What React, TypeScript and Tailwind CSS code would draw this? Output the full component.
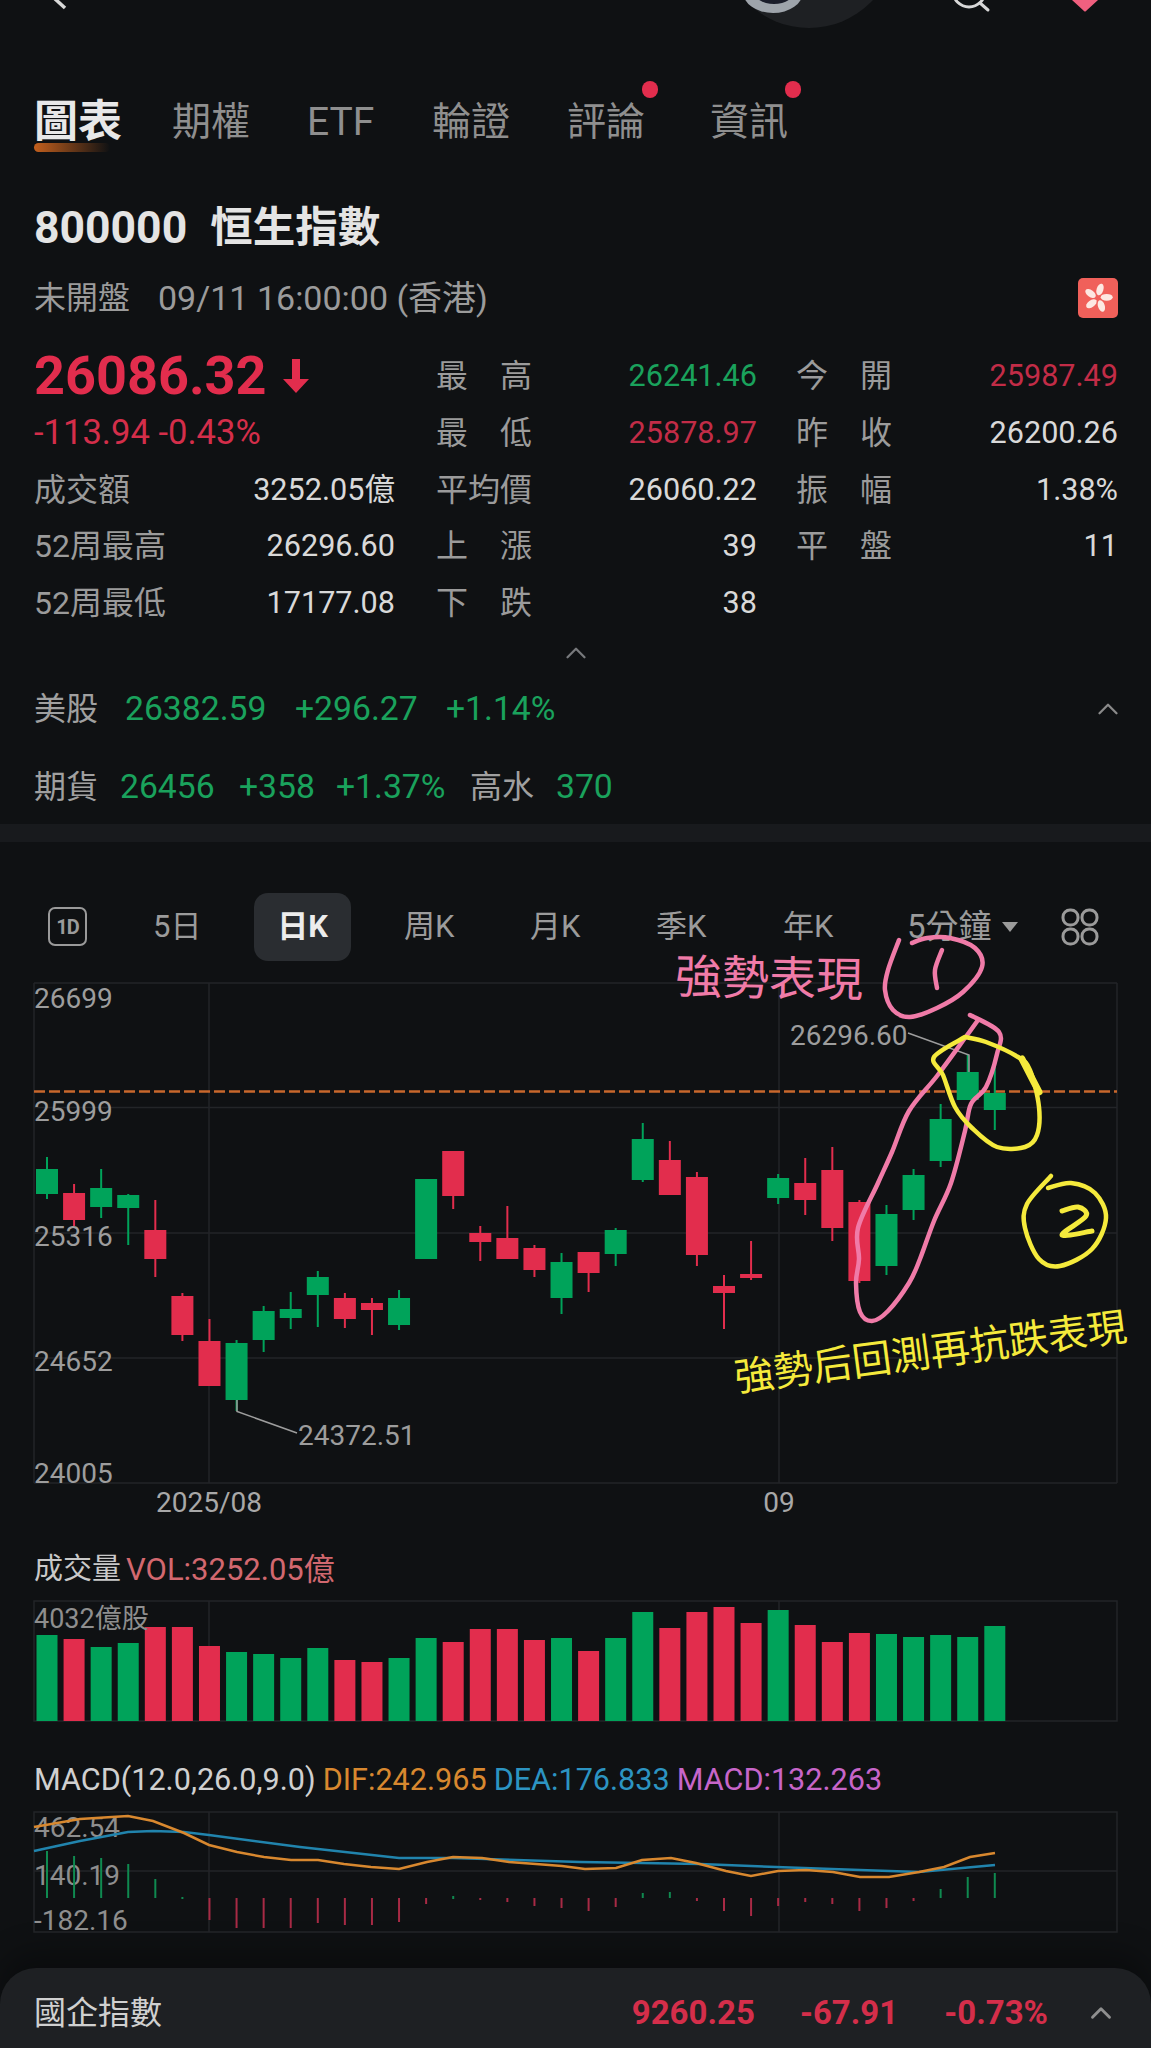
import { ChevronUp } from 'lucide-react'

const FONT = "font-['Roboto','Noto_Sans_CJK_TC',sans-serif]"
const UP = '#00a35a'
const DOWN = '#e22d4d'
const GRID = '#232528'
const PINK = '#f07ba8'
const YELLOW = '#f5ea3c'

type Pt = [number, number]

// [green?, high, top, bottom, low] in page pixels
const CANDLES: [number, number, number, number, number][] = [
  [1, 1157, 1169, 1194, 1199],
  [0, 1184, 1193, 1220, 1226],
  [1, 1169, 1188, 1207, 1218],
  [1, 1194, 1195, 1208, 1245],
  [0, 1200, 1230, 1259, 1277],
  [0, 1293, 1296, 1335, 1341],
  [0, 1319, 1341, 1386, 1386],
  [1, 1340, 1343, 1400, 1411],
  [1, 1306, 1311, 1340, 1352],
  [1, 1292, 1309, 1318, 1329],
  [1, 1271, 1277, 1295, 1327],
  [0, 1293, 1298, 1319, 1328],
  [0, 1298, 1303, 1310, 1335],
  [1, 1290, 1298, 1325, 1330],
  [1, 1179, 1179, 1259, 1259],
  [0, 1151, 1151, 1196, 1209],
  [0, 1226, 1233, 1242, 1261],
  [0, 1206, 1238, 1259, 1259],
  [0, 1245, 1248, 1270, 1277],
  [1, 1253, 1262, 1298, 1314],
  [0, 1252, 1252, 1273, 1292],
  [1, 1228, 1230, 1254, 1266],
  [1, 1123, 1139, 1180, 1182],
  [0, 1141, 1160, 1195, 1195],
  [0, 1172, 1177, 1255, 1266],
  [0, 1275, 1286, 1293, 1329],
  [0, 1241, 1274, 1278, 1280],
  [1, 1174, 1178, 1198, 1204],
  [0, 1158, 1183, 1200, 1215],
  [0, 1147, 1170, 1228, 1241],
  [0, 1200, 1202, 1281, 1283],
  [1, 1205, 1214, 1266, 1275],
  [1, 1169, 1175, 1210, 1220],
  [1, 1104, 1119, 1161, 1167],
  [1, 1055, 1072, 1100, 1100],
  [1, 1066, 1093, 1110, 1130],
]

// bar top in page pixels, all bars stand on y = 1721
const VOLUME: [number, number][] = [
  [1, 1635], [0, 1639], [1, 1647], [1, 1643], [0, 1627], [0, 1627], [0, 1646], [1, 1652], [1, 1654],
  [1, 1658], [1, 1648], [0, 1660], [0, 1662], [1, 1658], [1, 1638], [0, 1642], [0, 1629], [0, 1629],
  [0, 1640], [1, 1638], [0, 1651], [1, 1638], [1, 1612], [0, 1628], [0, 1612], [0, 1607], [0, 1623],
  [1, 1610], [0, 1625], [0, 1642], [0, 1633], [1, 1634], [1, 1637], [1, 1635], [1, 1637], [1, 1626],
]

// [green?, top, bottom] of the MACD histogram
const HIST: [number, number, number][] = [
  [1, 1851, 1898], [1, 1856, 1898], [1, 1858, 1898], [1, 1864, 1898], [1, 1879, 1898], [1, 1897, 1899],
  [0, 1898, 1920], [0, 1898, 1928], [0, 1898, 1928], [0, 1898, 1928], [0, 1898, 1923], [0, 1898, 1925],
  [0, 1898, 1925], [0, 1898, 1922], [0, 1898, 1904], [1, 1896, 1899], [0, 1898, 1898], [0, 1898, 1902],
  [0, 1898, 1906], [0, 1898, 1908], [0, 1898, 1911], [0, 1898, 1907], [1, 1893, 1898], [1, 1892, 1898],
  [0, 1898, 1901], [0, 1898, 1911], [0, 1898, 1916], [0, 1898, 1906], [0, 1898, 1902], [0, 1898, 1904],
  [0, 1898, 1911], [0, 1898, 1908], [0, 1898, 1901], [1, 1889, 1898], [1, 1877, 1898], [1, 1873, 1898],
]

const DEA_LINE =
  '34,1851 80,1841 128,1832 153,1831 184,1832 209,1835 300,1847 399,1858 453,1858 580,1862 642,1863 700,1864 751,1866 860,1870 919,1872 995,1865'
const DIF_LINE =
  '34,1827 80,1819 128,1816 153,1821 184,1833 209,1845 237,1852 264,1857 291,1860 318,1860 344,1864 371,1867 399,1869 427,1862 453,1857 482,1858 509,1862 536,1864 562,1866 585,1869 616,1868 642,1860 671,1858 696,1863 726,1871 751,1876 778,1871 806,1870 833,1872 860,1877 889,1877 919,1872 944,1867 970,1857 995,1853'

// pen marks on the screenshot
const BIG_LOOP: Pt[] = [
  [970, 1015], [999, 1032], [997, 1054], [986, 1087], [971, 1104], [965, 1131], [951, 1183], [934, 1221],
  [920, 1259], [909, 1283], [888, 1311], [872, 1321], [860, 1312], [856, 1283], [859, 1259], [858, 1228],
  [878, 1183], [892, 1152], [909, 1111], [937, 1076], [965, 1038], [978, 1020],
]
const CIRCLE_1: Pt[] = [
  [899, 940], [888, 970], [885, 990], [893, 1010], [910, 1017], [937, 1008], [963, 992], [982, 967], [975, 948],
  [950, 938], [927, 938], [912, 943],
]
const ONE: Pt[] = [[942, 950], [935, 970], [937, 988]]
const RING: Pt[] = [
  [965, 1037], [934, 1057], [943, 1075], [955, 1107], [972, 1128], [997, 1147], [1025, 1147], [1037, 1135],
  [1039, 1107], [1030, 1070], [1018, 1057], [986, 1042], [965, 1037],
]
const CIRCLE_2: Pt[] = [
  [1051, 1176], [1027, 1204], [1025, 1228], [1039, 1259], [1060, 1266], [1092, 1249], [1106, 1218], [1095, 1193],
  [1071, 1183], [1048, 1188],
]
const TWO: Pt[] = [[1062, 1211], [1078, 1207], [1086, 1216], [1062, 1235], [1092, 1231]]

// catmull-rom through the points
function smooth(p: Pt[]) {
  let d = `M${p[0][0]} ${p[0][1]}`
  for (let i = 0; i < p.length - 1; i++) {
    const a = p[Math.max(i - 1, 0)]
    const b = p[i]
    const c = p[i + 1]
    const e = p[Math.min(i + 2, p.length - 1)]
    d += `C${b[0] + (c[0] - a[0]) / 6} ${b[1] + (c[1] - a[1]) / 6} ${c[0] - (e[0] - b[0]) / 6} ${c[1] - (e[1] - b[1]) / 6} ${c[0]} ${c[1]}`
  }
  return d
}

const cx = (i: number) => 47 + i * 27.08

const Cell = ({
  label,
  value,
  color = 'text-[#d9d9d9]',
  className = '',
}: {
  label: string
  value: string
  color?: string
  className?: string
}) => (
  <div className={`flex items-center justify-between ${className}`}>
    <span className={`text-[#9b9b9b] text-[32px] ${label.length === 2 ? 'w-[96px] flex justify-between' : ''}`}>
      {label.length === 2 ? (
        <>
          <span>{label[0]}</span>
          <span>{label[1]}</span>
        </>
      ) : (
        label
      )}
    </span>
    <span className={`text-[30.6px] ${color}`}>{value}</span>
  </div>
)

function Candles() {
  return (
    <svg viewBox="0 960 1151 560" className="block w-[1151px] h-[560px] overflow-visible">
      {[983, 1107.5, 1233, 1358, 1483].map((y) => (
        <line key={y} x1="34" x2="1117" y1={y} y2={y} stroke={GRID} strokeWidth="1.5" />
      ))}
      {[34, 209, 779, 1117].map((x) => (
        <line key={x} x1={x} x2={x} y1="983" y2="1483" stroke={GRID} strokeWidth="1.5" />
      ))}
      {[
        ['26699', 998],
        ['25999', 1111],
        ['25316', 1236],
        ['24652', 1361],
        ['24005', 1473],
      ].map(([t, y]) => (
        <text key={t} x="34" y={Number(y) + 10} fill="#9d9d9d" fontSize="28">
          {t}
        </text>
      ))}
      <line x1="34" x2="1117" y1="1091.5" y2="1091.5" stroke="#c8672c" strokeWidth="2.5" strokeDasharray="11 4" />
      {CANDLES.map(([g, hi, top, bot, lo], i) => {
        const c = g ? UP : DOWN
        return (
          <g key={i}>
            <line x1={cx(i)} x2={cx(i)} y1={hi} y2={lo} stroke={c} strokeWidth="2" />
            <rect x={cx(i) - 11} y={top} width="22" height={bot - top} fill={c} />
          </g>
        )
      })}
      <path d="M237 1400V1411.5L297 1433" fill="none" stroke="#9d9d9d" strokeWidth="1.5" />
      <path d="M908 1033L969 1055V1072" fill="none" stroke="#9d9d9d" strokeWidth="1.5" />
      <text x="298" y="1445" fill="#9d9d9d" fontSize="28">24372.51</text>
      <text x="790" y="1045" fill="#9d9d9d" fontSize="28">26296.60</text>
      <text x="209" y="1512" fill="#a8a8a8" fontSize="28" textAnchor="middle">2025/08</text>
      <text x="779" y="1512" fill="#a8a8a8" fontSize="28" textAnchor="middle">09</text>
      <g fill="none" strokeLinecap="round" strokeLinejoin="round" strokeWidth="4.5">
        <path d={smooth(BIG_LOOP)} stroke={PINK} />
        <path d={smooth(CIRCLE_1)} stroke={PINK} />
        <path d={smooth(ONE)} stroke={PINK} />
        <path d={smooth(RING)} stroke={YELLOW} />
        <path d="M1022 1059L1039 1092" stroke={YELLOW} strokeWidth="7" />
        <path d={smooth(CIRCLE_2)} stroke={YELLOW} />
        <path d={smooth(TWO)} stroke={YELLOW} strokeWidth="5" />
      </g>
    </svg>
  )
}

function Volume() {
  return (
    <svg viewBox="0 1595 1151 130" className="block w-[1151px] h-[130px]">
      <rect x="34" y="1601" width="1083" height="120" fill="none" stroke={GRID} strokeWidth="1.5" />
      <line x1="209" x2="209" y1="1601" y2="1721" stroke={GRID} strokeWidth="1.5" />
      <line x1="779" x2="779" y1="1601" y2="1721" stroke={GRID} strokeWidth="1.5" />
      {VOLUME.map(([g, top], i) => (
        <rect key={i} x={cx(i) - 10.5} y={top} width="21" height={1721 - top} fill={g ? UP : DOWN} />
      ))}
      <text x="34" y="1628" fill="#8e8e8e" fontSize="27">4032億股</text>
    </svg>
  )
}

function Macd() {
  return (
    <svg viewBox="0 1808 1151 130" className="block w-[1151px] h-[130px]">
      <rect x="34" y="1812" width="1083" height="120" fill="none" stroke={GRID} strokeWidth="1.5" />
      <line x1="34" x2="1117" y1="1871" y2="1871" stroke={GRID} strokeWidth="1.5" />
      <line x1="209" x2="209" y1="1812" y2="1932" stroke={GRID} strokeWidth="1.5" />
      <line x1="779" x2="779" y1="1812" y2="1932" stroke={GRID} strokeWidth="1.5" />
      <text x="34" y="1837" fill="#8e8e8e" fontSize="28">462.54</text>
      <text x="34" y="1885" fill="#8e8e8e" fontSize="28">140.19</text>
      <text x="34" y="1930" fill="#8e8e8e" fontSize="28">-182.16</text>
      {HIST.map(([g, top, bot], i) => (
        <line key={i} x1={cx(i)} x2={cx(i)} y1={top} y2={Math.max(bot, top + 2)} stroke={g ? '#0f8a50' : '#a82a45'} strokeWidth="2" />
      ))}
      <polyline fill="none" stroke="#2184ad" strokeWidth="2.5" points={DEA_LINE} />
      <polyline fill="none" stroke="#d8882f" strokeWidth="2.5" points={DIF_LINE} />
    </svg>
  )
}

export default function App() {
  return (
    <div className={`w-[1151px] h-[2048px] overflow-hidden bg-[#0f1113] text-[#d9d9d9] ${FONT}`}>
      {/* cropped top bar */}
      <div className="h-[86px] flex items-start pl-[53px]">
        <svg width="14" height="10" viewBox="0 0 14 10" fill="none" stroke="#d8d8d8" strokeWidth="3.5">
          <path d="M1 -2L12 8" />
        </svg>
        <svg width="140" height="30" viewBox="0 0 140 30" className="ml-[673px]">
          <circle cx="69" cy="-59" r="87" fill="#1e2023" />
          <ellipse cx="33" cy="-8" rx="30" ry="21" fill="#9ea4ab" />
          <ellipse cx="34" cy="-10" rx="21" ry="14" fill="#1a1d2a" />
        </svg>
        <svg width="50" height="14" viewBox="0 0 50 14" fill="none" stroke="#d8d8d8" strokeWidth="3" strokeLinecap="round" className="ml-[70px]">
          <circle cx="19" cy="-9" r="16" />
          <path d="M30 3L38 10" />
        </svg>
        <svg width="26" height="12" viewBox="0 0 26 12" fill="#f0607f" className="ml-[72px]">
          <path d="M0 0H26L14 11Q13 12 12 11Z" />
        </svg>
      </div>

      {/* tabs */}
      <div className="relative h-[72px] flex items-center pl-[34px] text-[39px] text-[#8f8f8f]">
        <span className="relative w-[138px] text-[44px] font-bold text-[#e8e8e8]">
          <span className="absolute left-0 bottom-[3px] w-[76px] h-[9px] rounded-full bg-linear-to-r from-[#c25f1d] to-transparent" />
          <span className="relative">圖表</span>
        </span>
        <span className="w-[135px]">期權</span>
        <span className="w-[125px]">ETF</span>
        <span className="w-[135px]">輪證</span>
        <span className="relative w-[143px]">
          評論
          <span className="absolute left-[75px] top-[-12px] w-[16px] h-[17px] rounded-full bg-[#e22d4d]" />
        </span>
        <span className="relative">
          資訊
          <span className="absolute left-[75px] top-[-12px] w-[16px] h-[17px] rounded-full bg-[#e22d4d]" />
        </span>
      </div>

      {/* title */}
      <div className="mt-[45px] pl-[34px] h-[50px] flex items-center font-bold text-[#e4e4e4] gap-[23px]">
        <span className="text-[44.5px]">800000</span>
        <span className="text-[42.5px]">恒生指數</span>
      </div>
      <div className="mt-[23px] h-[44px] pl-[34px] pr-[33px] flex items-center text-[#9b9b9b]">
        <span className="text-[32px]">未開盤</span>
        <span className="ml-[28px] text-[34px]">09/11 16:00:00 (香港)</span>
        <span className="ml-auto w-[40px] h-[40px] rounded-[5px] bg-[#f0605a] flex items-center justify-center">
          <svg width="32" height="32" viewBox="-16 -16 32 32" fill="#fde8e2">
            {[0, 72, 144, 216, 288].map((a) => (
              <ellipse key={a} cx="2" cy="-8.5" rx="3.4" ry="6" transform={`rotate(${a}) rotate(18 2 -8.5)`} />
            ))}
          </svg>
        </span>
      </div>

      {/* quote table */}
      <div className="mt-[28px] pl-[34px] pr-[33px] grid grid-cols-[361px_321px_320px] gap-x-[41px] auto-rows-[56.7px] items-center">
        <div className="flex items-center gap-[15px]">
          <span className="text-[54px] font-bold leading-none text-[#e22d4d]">26086.32</span>
          <svg width="28" height="34" viewBox="0 0 28 34" fill="#e22d4d">
            <path d="M10 0H18V20H27L14 34L1 20H10Z" />
          </svg>
        </div>
        <Cell label="最高" value="26241.46" color="text-[#1aa25c]" />
        <Cell label="今開" value="25987.49" color="text-[#c22c47]" className="-ml-[2px]" />

        <div className="text-[34.6px] text-[#d42e4a] whitespace-pre">-113.94 -0.43%</div>
        <Cell label="最低" value="25878.97" color="text-[#c22c47]" />
        <Cell label="昨收" value="26200.26" className="-ml-[2px]" />

        <Cell label="成交額" value="3252.05億" />
        <Cell label="平均價" value="26060.22" />
        <Cell label="振幅" value="1.38%" className="-ml-[2px]" />

        <Cell label="52周最高" value="26296.60" />
        <Cell label="上漲" value="39" />
        <Cell label="平盤" value="11" className="-ml-[2px]" />

        <Cell label="52周最低" value="17177.08" />
        <Cell label="下跌" value="38" />
      </div>

      <div className="h-[44px] flex items-center justify-center text-[#77797c]">
        <ChevronUp className="w-[34px] h-[34px]" strokeWidth={1.6} />
      </div>

      {/* pre-market rows */}
      <div className="mt-[5.5px] h-[56px] pl-[34px] pr-[26px] flex items-center text-[33.7px] text-[#1aa25c]">
        <span className="text-[32px] text-[#a0a0a0] w-[91px]">美股</span>
        <span className="w-[170px]">26382.59</span>
        <span className="w-[151px]">+296.27</span>
        <span>+1.14%</span>
        <ChevronUp className="ml-auto w-[34px] h-[34px] text-[#8a8a8a]" strokeWidth={1.6} />
      </div>
      <div className="mt-[22px] h-[56px] pl-[34px] flex items-center text-[33.7px] text-[#1aa25c]">
        <span className="text-[32px] text-[#a0a0a0] w-[86px]">期貨</span>
        <span className="w-[119px]">26456</span>
        <span className="w-[97px]">+358</span>
        <span className="w-[134px]">+1.37%</span>
        <span className="text-[32px] text-[#a0a0a0] w-[86px]">高水</span>
        <span>370</span>
      </div>

      <div className="mt-[9px] h-[18px] bg-[#181a1d]" />

      {/* period selector */}
      <div className="mt-[51px] h-[68px] pl-[48px] flex items-center text-[31px] text-[#9b9b9b]">
        <span className="w-[39px] h-[39px] rounded-[7px] border-[2.5px] border-[#9a9a9a] flex items-center justify-center text-[20px] font-bold tracking-[-1px]">1D</span>
        <span className="ml-[66px] w-[101px]">5日</span>
        <span className="w-[97px] h-[68px] rounded-[14px] bg-[#2a2d31] flex items-center justify-center font-bold text-[#ececec]">日K</span>
        <span className="ml-[53px] w-[126px]">周K</span>
        <span className="w-[126px]">月K</span>
        <span className="w-[127px]">季K</span>
        <span className="w-[124px]">年K</span>
        <span className="w-[95px] text-[33px] whitespace-nowrap">5分鐘</span>
        <span className="w-0 h-0 border-x-[8px] border-x-transparent border-t-[10px] border-t-[#9b9b9b]" />
        <svg width="38" height="38" viewBox="0 0 38 38" fill="none" stroke="#9b9b9b" strokeWidth="3" className="ml-[43px]">
          <rect x="2" y="2" width="15" height="15" rx="7" />
          <rect x="21" y="2" width="15" height="15" rx="7" />
          <rect x="2" y="21" width="15" height="15" rx="7" />
          <rect x="21" y="21" width="15" height="15" rx="7" />
        </svg>
      </div>

      <div className="relative -mt-[1px]">
        <Candles />
        <span className="absolute left-[675px] top-[-5px] text-[47px] leading-none text-[#f07ba8] rotate-[1deg]">強勢表現</span>
        <span className="absolute left-[733px] top-[373px] text-[39.5px] leading-none text-[#f5ea3c] -rotate-[7.5deg] whitespace-nowrap">強勢后回測再抗跌表現</span>
      </div>

      {/* volume */}
      <div className="mt-[30px] h-[40px] pl-[34px] flex items-center gap-[5px]">
        <span className="text-[29px] text-[#c9c9c9]">成交量</span>
        <span className="text-[31px] text-[#d2686f]">VOL:3252.05億</span>
      </div>
      <div className="mt-[5px]">
        <Volume />
      </div>

      {/* macd */}
      <div className="mt-[35px] h-[40px] pl-[34px] flex items-center text-[30.6px] gap-[7px] whitespace-nowrap">
        <span className="text-[#d0d0d0]">MACD(12.0,26.0,9.0)</span>
        <span className="text-[#d8882f]">DIF:242.965</span>
        <span className="text-[#2c94c2]">DEA:176.833</span>
        <span className="text-[#c765c9]">MACD:132.263</span>
      </div>
      <div className="mt-[8px]">
        <Macd />
      </div>

      {/* bottom sheet */}
      <div className="mt-[30px] h-[90px] rounded-t-[36px] bg-[#1e2023] pl-[34px] pr-[33px] flex items-center shadow-[0_-16px_30px_rgba(0,0,0,0.3)]">
        <span className="text-[32px] text-[#d0d0d0]">國企指數</span>
        <span className="ml-auto text-[33px] font-bold text-[#d42e4a]">9260.25</span>
        <span className="ml-[45px] text-[33px] font-bold text-[#d42e4a]">-67.91</span>
        <span className="ml-[46px] text-[33px] font-bold text-[#d42e4a]">-0.73%</span>
        <ChevronUp className="ml-[36px] w-[34px] h-[34px] text-[#8f8f8f]" strokeWidth={2} />
      </div>
    </div>
  )
}
